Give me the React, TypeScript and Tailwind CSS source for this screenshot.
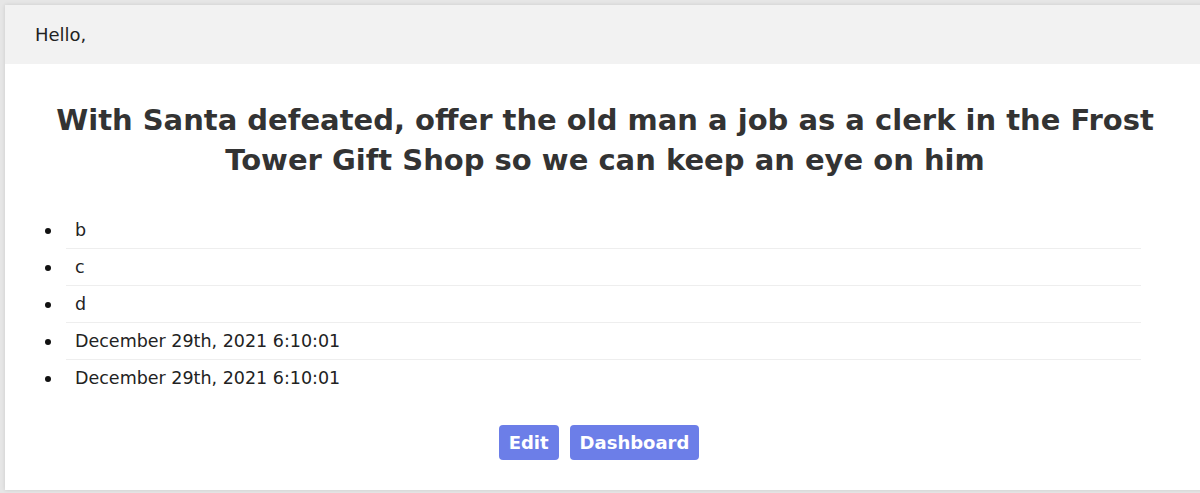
import React from "react";

const items = ["b", "c", "d", "December 29th, 2021 6:10:01", "December 29th, 2021 6:10:01"];

export default function App() {
  return (
    <div className="min-h-[493px] w-[1200px] overflow-hidden bg-[#e6e6e6] pl-[5px] pt-[5px] text-[#222]" style={{ fontFamily: "'DejaVu Sans', 'Open Sans', sans-serif" }}>
      <div className="h-[485px] w-[1200px] bg-white shadow-[0_0_4px_rgba(0,0,0,0.12)]">
        <div className="flex h-[59px] items-center bg-[#f2f2f2] pl-[30px] text-[18px]">Hello,</div>
        <h1 className="mx-auto mt-[36px] w-[1150px] text-center text-[29px] font-bold leading-[40px] text-[#333]">
          With Santa defeated, offer the old man a job as a clerk in the Frost Tower Gift Shop so we can keep an eye on him
        </h1>
        <ul className="ml-[61px] mt-[32px] w-[1075px] list-none text-[17.5px]">
          {items.map((t, i) => (
            <li key={i} className={`relative pl-[9px] leading-[36px] ${i < items.length - 1 ? "border-b border-[#eeeeee]" : ""}`}>
              <span className="absolute left-[-21px] top-[16px] h-[6px] w-[6px] rounded-full bg-[#111]" />
              {t}
            </li>
          ))}
        </ul>
        <div className="mt-[29px] flex justify-center gap-[11px] pr-[12px]">
          <button className="h-[35px] rounded-[4px] bg-[#6c7ee8] px-[10px] text-[18px] font-bold text-white">Edit</button>
          <button className="h-[35px] rounded-[4px] bg-[#6c7ee8] px-[10px] text-[18px] font-bold text-white">Dashboard</button>
        </div>
      </div>
    </div>
  );
}
